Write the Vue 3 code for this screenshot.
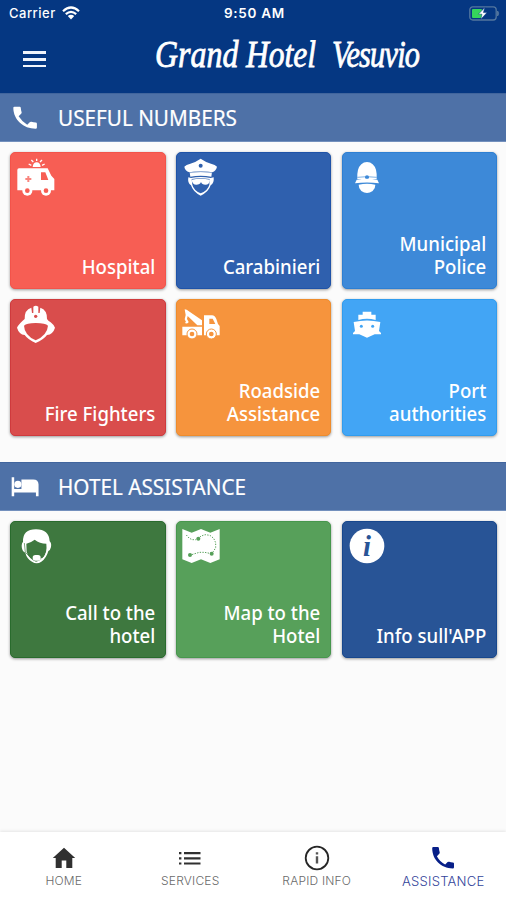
<script setup>
import { ref } from 'vue'

const sections = [
  {
    title: 'USEFUL NUMBERS',
    icon: 'phone',
    tiles: [
      { icon: 'ambulance', lines: ['Hospital'], color: '#f75e54', edge: '#f3534a' },
      { icon: 'officer', lines: ['Carabinieri'], color: '#2f60ae', edge: '#1f53a8' },
      { icon: 'helmet', lines: ['Municipal', 'Police'], color: '#3d89d8', edge: '#2d7fd3' },
      { icon: 'fireman', lines: ['Fire Fighters'], color: '#d94d4c', edge: '#cf3a3d' },
      { icon: 'tow', lines: ['Roadside', 'Assistance'], color: '#f6943d', edge: '#ee8c2c' },
      { icon: 'ship', lines: ['Port', 'authorities'], color: '#42a5f5', edge: '#309cee' }
    ]
  },
  {
    title: 'HOTEL ASSISTANCE',
    icon: 'bed',
    tiles: [
      { icon: 'operator', lines: ['Call to the', 'hotel'], color: '#3e783f', edge: '#296b2d' },
      { icon: 'map', lines: ['Map to the', 'Hotel'], color: '#57a05a', edge: '#47974d' },
      { icon: 'info', lines: ["Info sull'APP"], color: '#285496', edge: '#17478d' }
    ]
  }
]

const tabs = [
  { id: 'home', label: 'HOME' },
  { id: 'services', label: 'SERVICES' },
  { id: 'rapid', label: 'RAPID INFO' },
  { id: 'assistance', label: 'ASSISTANCE' }
]
const activeTab = ref('assistance')
</script>

<template>
  <div class="app">
    <header class="header">
      <div class="status">
        <div class="carrier">
          <span>Carrier</span>
          <svg class="wifi" viewBox="0 0 18 14">
            <path d="M1 5.2Q9-2.2 17 5.2M3.8 8.1Q9 3.6 14.2 8.1" fill="none" stroke="#fff" stroke-width="2.2" />
            <path d="M5.8 10Q9 7.4 12.2 10L9 13.4z" fill="#fff" />
          </svg>
        </div>
        <span class="clock">9:50 AM</span>
        <svg class="battery" viewBox="0 0 31 15">
          <rect x=".8" y=".8" width="26.4" height="13.2" rx="3" fill="none" stroke="#54779f" stroke-width="1.3" />
          <path d="M28.6 5Q30.6 7.5 28.6 10z" fill="#54779f" stroke="#54779f" />
          <rect x="3" y="3" width="10" height="9" rx="1" fill="#35d45c" />
          <path d="M15.8 1.6L9.4 8.2H13L11.8 13.2L18 6.6H14.4z" fill="#fff" stroke="#053782" stroke-width=".5" />
        </svg>
      </div>
      <div class="titleBar">
        <button class="menu"><span></span><span></span><span></span></button>
        <h1><span class="grand">Grand</span><span class="hotel">Hotel</span><span class="vesuvio">Vesuvio</span></h1>
      </div>
    </header>

    <main>
      <section v-for="section in sections" :key="section.title">
        <div class="sectionHead">
          <svg v-if="section.icon === 'phone'" class="headIcon" viewBox="0 0 30 30">
            <path d="M3.6 3.8H9Q10 3.8 10.1 5Q10.2 7.4 11 9.6Q11.2 10.5 10.5 11.2L7.9 13.8Q11.4 19.5 16.8 22.4L19.4 19.8Q20.1 19.2 21 19.4Q23.4 20.2 25.6 20.3Q26.8 20.4 26.8 21.5V25.4Q26.8 26.7 25.5 26.7C13 26.7 2.4 17.5 2.4 5Q2.4 3.8 3.6 3.8z" />
          </svg>
          <svg v-else class="headIcon" viewBox="0 0 30 30">
            <path d="M.7 5.5H3.3V17.6H10.8V7.7H23Q28.5 7.7 28.5 13V25H25.8V21.2H3.3V25H.7z" />
            <circle cx="7.1" cy="12.8" r="3.7" />
          </svg>
          <h2>{{ section.title }}</h2>
        </div>
        <div class="grid">
          <div
            v-for="tile in section.tiles"
            :key="tile.icon"
            class="tile"
            :style="{ backgroundColor: tile.color, borderColor: tile.edge }"
          >
            <svg class="tileIcon" viewBox="0 0 114 114">
              <g v-if="tile.icon === 'ambulance'">
                <path d="M6 31H92L103 53L112 63V97H1V36Q1 31 6 31z" />
                <path d="M72 43H85L94 66H72z" :fill="tile.color" />
                <path d="M31 54H37V60H43V66H37V72H31V66H25V60H31z" :fill="tile.color" opacity=".75" />
                <path d="M47 27Q48 13 59 13Q70 13 71 27z" />
                <path d="M35 18L43 22M43 6L49 12M59 2V9M75 6L69 12M83 18L75 22" fill="none" stroke="#fff" stroke-width="4" />
                <circle cx="31" cy="98" r="15" />
                <circle cx="87" cy="98" r="15" />
                <circle cx="31" cy="98" r="7" :fill="tile.color" />
                <circle cx="87" cy="98" r="7" :fill="tile.color" />
              </g>
              <g v-else-if="tile.icon === 'officer'">
                <path d="M7 26Q12 20 25 17Q42 12 56 2Q70 12 87 17Q100 20 105 26Q102 39 91 43Q56 37 22 43Q9 39 7 26z" />
                <path d="M23 43Q56 37 90 43L88 56Q56 50 25 56z" />
                <path d="M23 44Q56 38 90 44" fill="none" :stroke="tile.color" stroke-width="1.5" />
                <circle cx="56" cy="23" r="6" :fill="tile.color" />
                <path d="M19 58L27 60Q56 54 86 60L95 58Q97 76 86 82Q80 102 56 113Q33 102 27 82Q16 76 19 58z" />
                <path d="M29 63Q56 58 83 63L82 80Q78 97 56 106Q35 97 31 80z" :fill="tile.color" />
                <path d="M29 65Q56 60 84 65Q83 80 70 80Q60 80 57 72Q54 80 43 80Q31 80 29 65z" />
              </g>
              <g v-else-if="tile.icon === 'helmet'">
                <path d="M28 63Q26 31 40 19Q47 12 57 12Q67 12 74 19Q88 31 86 63z" />
                <path d="M28 58Q57 54 86 58" fill="none" :stroke="tile.color" stroke-width="2" />
                <circle cx="57" cy="58" r="6" :fill="tile.color" />
                <path d="M26 65Q57 60 88 65L93 76Q57 71 21 76z" />
                <path d="M32 80Q57 75 82 80Q82 92 74 99Q57 111 40 99Q32 92 32 80z" />
              </g>
              <g v-else-if="tile.icon === 'fireman'">
                <path d="M23 42Q22 14 43 8L45 24H49V5Q56 0 64 5V24H68L70 8Q91 15 90 42Q93 47 101 52Q109 58 114 68Q108 88 90 90Q80 104 56 114Q33 104 23 90Q6 88 0 68Q6 56 23 42z" />
                <path d="M21 62Q28 54 56 54Q86 54 93 62Q91 90 56 106Q22 90 21 62z" :fill="tile.color" />
                <circle cx="56" cy="34" r="5" :fill="tile.color" />
              </g>
              <g v-else-if="tile.icon === 'tow'">
                <path d="M8 13L14 14L60 46V61H46L17 33L15 42L20 51Q18 58 8 54L12 51L8 43L11 30z" />
                <path d="M1 65H60V91H1zM66 31H90Q99 32 103 42L108 57L113 63V91H66z" />
                <path d="M82 41H92L100 57H82z" :fill="tile.color" />
                <circle cx="30" cy="87" r="15" :stroke="tile.color" stroke-width="3" />
                <circle cx="88" cy="87" r="15" :stroke="tile.color" stroke-width="3" />
                <circle cx="30" cy="87" r="7" :fill="tile.color" />
                <circle cx="88" cy="87" r="7" :fill="tile.color" />
              </g>
              <g v-else-if="tile.icon === 'ship'">
                <path d="M44 20H70V29H83V45Q57 38 31 45V29H44z" />
                <path d="M17 51Q57 42 97 51L93 78L99 84V88H80L57 98L34 88H15V84L21 78z" />
                <circle cx="40" cy="64" r="4.5" :fill="tile.color" />
                <circle cx="74" cy="64" r="4.5" :fill="tile.color" />
              </g>
              <g v-else-if="tile.icon === 'operator'">
                <path d="M18 44Q17 7 57 7Q96 7 98 43Q104 48 102 60Q100 70 94 72Q88 94 73 104Q59 114 45 104Q29 95 25 77Q14 72 14 56Q14 48 18 44z" />
                <path d="M28 50Q40 48 53 38Q68 50 88 50Q91 76 79 91Q65 104 57 104Q38 98 29 76z" :fill="tile.color" />
                <path d="M22 48L25 76L43 94" fill="none" :stroke="tile.color" stroke-width="2" />
                <path d="M89 75Q85 93 70 97" fill="none" stroke="#fff" stroke-width="3" />
                <rect x="47" y="84" width="24" height="17" rx="8" />
              </g>
              <g v-else-if="tile.icon === 'map'">
                <path d="M1 6L29 17L57 6L85 17L113 6V97L85 108L57 97L29 108L1 97z" />
                <path d="M13 24L22 34L31 38H41L49 33L58 27L69 23L84 25L95 34L101 47L101 62L94 74L83 79L68 76L52 76L35 81L24 85" fill="none" :stroke="tile.color" stroke-width="3" stroke-dasharray="4 4" />
                <circle cx="49" cy="35" r="6" :fill="tile.color" />
                <circle cx="89" cy="80" r="6" :fill="tile.color" />
                <circle cx="24" cy="84" r="6" :fill="tile.color" />
              </g>
              <g v-else>
                <circle cx="57" cy="57" r="52" />
                <text x="57" y="86" text-anchor="middle" class="infoLetter" :fill="tile.color">i</text>
              </g>
            </svg>
            <p><span v-for="line in tile.lines" :key="line">{{ line }}</span></p>
          </div>
        </div>
      </section>
    </main>

    <nav class="tabs">
      <button
        v-for="tab in tabs"
        :key="tab.id"
        class="tab"
        :class="{ active: activeTab === tab.id }"
        @click="activeTab = tab.id"
      >
        <svg class="tabIcon" viewBox="0 0 26 26">
          <path v-if="tab.id === 'home'" d="M13 2.8L24.2 13H21.3V23H15.3V15.5H10.7V23H4.7V13H1.8z" />
          <path v-else-if="tab.id === 'services'" d="M2 7h2.4v2.2H2zM7 7h16.5v2.2H7zM2 12.2h2.4v2.2H2zM7 12.2h16.5v2.2H7zM2 17.4h2.4v2.2H2zM7 17.4h16.5v2.2H7z" />
          <g v-else-if="tab.id === 'rapid'">
            <circle cx="13" cy="13" r="11.3" fill="none" stroke="#262626" stroke-width="1.8" />
            <path d="M11.8 7.2h2.4v2.2h-2.4zM11.8 11.2h2.4v7.2h-2.4z" fill="#555" />
          </g>
          <path v-else d="M3.3 2H7.8Q8.8 2 8.9 3Q9 5.2 9.7 7.3Q9.9 8.1 9.3 8.8L6.9 11.2Q10 17 15.2 19.5L17.6 17.1Q18.3 16.5 19.1 16.7Q21 17.4 22.8 17.5Q24 17.6 24 18.6V22.2Q24 23.4 22.8 23.4C11 23.4 2.2 14.4 2.2 3.2Q2.2 2 3.3 2z" />
        </svg>
        <span>{{ tab.label }}</span>
      </button>
    </nav>
  </div>
</template>

<style>
body {
  margin: 0;
}
</style>

<style scoped>
.app {
  width: 506px;
  height: 900px;
  display: flex;
  flex-direction: column;
  overflow: hidden;
  background: #fbfbfb;
  font-family: "Noto Sans", "Open Sans", sans-serif;
}
button {
  border: 0;
  padding: 0;
  background: none;
  font: inherit;
}

/* Header */
.header {
  height: 93px;
  flex: none;
  background: #053782;
  color: #fff;
}
.status {
  height: 26px;
  display: grid;
  grid-template-columns: 1fr auto 1fr;
  align-items: center;
  padding: 0 6px 0 9px;
  box-sizing: border-box;
  font: 500 13px Inter, sans-serif;
}
.carrier {
  display: flex;
  align-items: center;
  gap: 6px;
  letter-spacing: 0.5px;
}
.wifi {
  width: 18px;
  height: 14px;
}
.clock {
  font-size: 13.5px;
  font-weight: 600;
  letter-spacing: 0.7px;
}
.battery {
  width: 31px;
  height: 15px;
  justify-self: end;
}
.titleBar {
  height: 67px;
  display: flex;
  align-items: flex-start;
}
.menu {
  width: 23px;
  display: flex;
  flex-direction: column;
  gap: 4px;
  margin: 25px 0 0 23px;
}
.menu span {
  height: 2.8px;
  background: #f1f4fb;
}
h1 {
  display: grid;
  grid-template-columns: 91px 86px 92px;
  margin: 7px 0 0 109px;
  font: italic 400 38px/42px "Liberation Serif", serif;
  white-space: nowrap;
  -webkit-text-stroke: 0.8px #fff;
}
h1 span {
  transform-origin: left center;
}
.grand {
  transform: scaleX(0.84);
}
.hotel {
  transform: scaleX(0.83);
}
.vesuvio {
  letter-spacing: -1px;
  transform: scaleX(0.8);
}

/* Sections */
.sectionHead {
  height: 49px;
  display: flex;
  align-items: center;
  gap: 18px;
  padding-left: 10.5px;
  box-sizing: border-box;
  background: #4e71a7;
  border-top: 1px solid #41659d;
  border-bottom: 1px solid #7390bd;
  color: #fff;
}
.headIcon {
  width: 29px;
  height: 29px;
  fill: #fff;
}
h2 {
  margin: 0;
  font-size: 21.5px;
  font-weight: 400;
  white-space: nowrap;
  transform: scaleX(0.963);
  transform-origin: left center;
  -webkit-text-stroke: 0.2px #fff;
}
.grid {
  display: grid;
  grid-template-columns: repeat(3, 155.3px);
  grid-auto-rows: 137px;
  gap: 10px 10.3px;
  padding: 10px 10.4px 0;
}
section + section {
  margin-top: 26px;
}
.tile {
  display: flex;
  flex-direction: column;
  justify-content: space-between;
  box-sizing: border-box;
  padding: 5px 9.5px 10px 5.5px;
  border: 1px solid;
  border-radius: 5px;
  box-shadow: 0 1px 3px rgba(0, 0, 0, 0.4);
}
.tileIcon {
  width: 38px;
  height: 38px;
  fill: #fff;
}
.tile p {
  display: flex;
  flex-direction: column;
  align-items: flex-end;
  margin: 0;
  color: #fff;
  font-size: 20px;
  font-weight: 500;
  line-height: 23px;
  white-space: nowrap;
  transform: scaleX(0.93);
  transform-origin: right center;
}
.infoLetter {
  font: italic 700 86px "Liberation Serif", serif;
}

/* Bottom tabs */
.tabs {
  height: 68px;
  flex: none;
  display: flex;
  margin-top: auto;
  background: #fff;
  box-shadow: 0 -1px 3px rgba(0, 0, 0, 0.09);
}
.tab {
  flex: 1;
  display: flex;
  flex-direction: column;
  align-items: center;
  padding: 13px 0 0 1px;
  color: #6a6a6a;
  font: 300 12px/16px Inter, sans-serif;
  letter-spacing: 0.2px;
}
.tabIcon {
  width: 26px;
  height: 26px;
  margin-bottom: 2px;
  fill: #303030;
}
.active {
  color: #33449a;
  font-size: 13.1px;
}
.active .tabIcon {
  fill: #071f88;
}
</style>
